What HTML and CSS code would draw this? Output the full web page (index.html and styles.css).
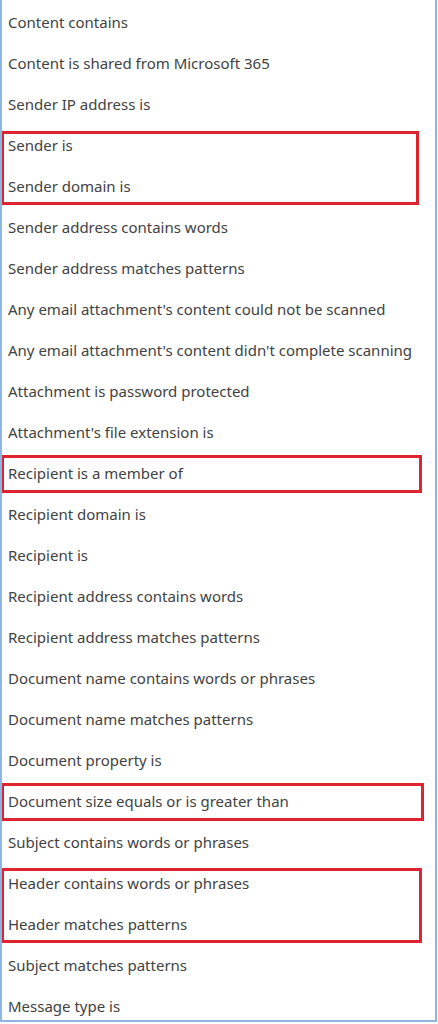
FILE: index.html
```html
<!DOCTYPE html>
<html>
<head>
<meta charset="utf-8">
<link rel="stylesheet" href="styles.css">
</head>
<body>
<div class="frame">
  <ul class="list">
    <li>Content contains</li>
    <li>Content is shared from Microsoft 365</li>
    <li>Sender IP address is</li>
    <li>Sender is</li>
    <li>Sender domain is</li>
    <li>Sender address contains words</li>
    <li>Sender address matches patterns</li>
    <li>Any email attachment's content could not be scanned</li>
    <li>Any email attachment's content didn't complete scanning</li>
    <li>Attachment is password protected</li>
    <li>Attachment's file extension is</li>
    <li>Recipient is a member of</li>
    <li>Recipient domain is</li>
    <li>Recipient is</li>
    <li>Recipient address contains words</li>
    <li>Recipient address matches patterns</li>
    <li>Document name contains words or phrases</li>
    <li>Document name matches patterns</li>
    <li>Document property is</li>
    <li>Document size equals or is greater than</li>
    <li>Subject contains words or phrases</li>
    <li>Header contains words or phrases</li>
    <li>Header matches patterns</li>
    <li>Subject matches patterns</li>
    <li>Message type is</li>
  </ul>
  <div class="mark mark-1"></div>
  <div class="mark mark-2"></div>
  <div class="mark mark-3"></div>
  <div class="mark mark-4"></div>
</div>
</body>
</html>
```
FILE: styles.css
```css
html, body {
  margin: 0;
  padding: 0;
  background: #ffffff;
}
.frame {
  position: relative;
  width: 437px;
  height: 1022px;
  box-sizing: border-box;
  border-left: 2px solid #8db6e2;
  border-right: 2px solid #8db6e2;
  border-bottom: 2px solid #8db6e2;
  overflow: hidden;
}
.list {
  list-style: none;
  margin: 0;
  padding: 1px 0 0 0;
}
.list li {
  height: 41px;
  display: flex;
  align-items: center;
  padding-left: 6px;
  font-family: "Noto Sans", "Open Sans", sans-serif;
  font-size: 15px;
  color: #424242;
  white-space: nowrap;
}
.mark {
  position: absolute;
  left: -1px;
  border: 3px solid #de2431;
  box-sizing: border-box;
}
.mark-1 { top: 131px; width: 418px; height: 74px; }
.mark-2 { top: 455px; width: 421px; height: 38px; }
.mark-3 { top: 783px; width: 423px; height: 38px; }
.mark-4 { top: 868px; width: 421px; height: 75px; }
```
